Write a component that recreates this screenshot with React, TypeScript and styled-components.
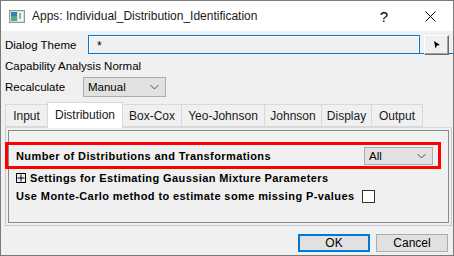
import styled, { createGlobalStyle } from "styled-components";

const GlobalStyle = createGlobalStyle`
  body {
    margin: 0;
    background: #ffffff;
  }
  * {
    box-sizing: border-box;
  }
`;

const Window = styled.div`
  width: 454px;
  height: 256px;
  border: 1px solid #7a7a7a;
  background: #f0f0f0;
  display: flex;
  flex-direction: column;
  font-family: "Liberation Sans", Arial, sans-serif;
  color: #000;
  overflow: hidden;
`;

const TitleBar = styled.div`
  height: 30px;
  background: #ffffff;
  display: flex;
  align-items: center;
  padding-left: 8px;
  flex-shrink: 0;
`;

const TitleText = styled.div`
  font-size: 12px;
  margin-left: 7px;
  flex: 1;
  white-space: nowrap;
  color: #1a1a1a;
`;

const TitleButton = styled.div<{ $w: number }>`
  width: ${(p) => p.$w}px;
  height: 30px;
  display: flex;
  align-items: center;
  justify-content: center;
  font-size: 15px;
`;

const Body = styled.div`
  display: flex;
  flex-direction: column;
  padding-left: 4px;
  flex: 1;
`;

const Row = styled.div<{ $h: number; $top?: number }>`
  display: flex;
  align-items: center;
  height: ${(p) => p.$h}px;
  margin-top: ${(p) => p.$top ?? 0}px;
  font-size: 11.5px;
  white-space: nowrap;
`;

const Label = styled.div<{ $w?: number }>`
  width: ${(p) => (p.$w ? `${p.$w}px` : "auto")};
  flex-shrink: 0;
`;

const ThemeField = styled.div`
  flex: 1;
  height: 19px;
  display: flex;
  align-items: flex-start;
  border-bottom: 1px solid #0078d7;
  align-self: flex-start;
`;

const ThemeInput = styled.div`
  width: 332px;
  height: 18px;
  border: 1px solid #0078d7;
  border-bottom: none;
  box-shadow: inset 1px 1px 0 #fff, inset -1px 0 0 #fff;
  background: #f0f0f0;
  padding-left: 8px;
  font-size: 12px;
  line-height: 20px;
`;

const ArrowButton = styled.div`
  width: 25px;
  height: 20px;
  margin-left: 4px;
  flex-shrink: 0;
  background: #f0f0f0;
  border: 1px solid;
  border-color: #ffffff #6a6a6a #6a6a6a #ffffff;
  box-shadow: inset -1px -1px 0 #a0a0a0;
  display: flex;
  align-items: center;
  justify-content: center;
  position: relative;
  z-index: 1;
`;

const Select = styled.div<{ $w: number; $h: number }>`
  width: ${(p) => p.$w}px;
  height: ${(p) => p.$h}px;
  background: #e1e1e1;
  border: 1px solid #adadad;
  display: flex;
  align-items: center;
  justify-content: space-between;
  padding: 0 6px 0 4px;
  font-family: "Liberation Sans", Arial, sans-serif;
  font-weight: normal;
  letter-spacing: 0;
  font-size: 11.5px;
`;

const TabStrip = styled.div`
  display: flex;
  align-items: flex-end;
  height: 25px;
  margin-top: 5px;
  position: relative;
  z-index: 1;
`;

const Tab = styled.div<{ $w: number; $active?: boolean; $first?: boolean }>`
  width: ${(p) => p.$w}px;
  height: ${(p) => (p.$active ? 26 : 23)}px;
  margin-bottom: ${(p) => (p.$active ? -1 : 0)}px;
  background: ${(p) => (p.$active ? "#ffffff" : "#f0f0f0")};
  border: 1px solid #d9d9d9;
  border-bottom: ${(p) => (p.$active ? "none" : "1px solid #d9d9d9")};
  border-left: ${(p) => (p.$first || p.$active ? "1px solid #d9d9d9" : "none")};
  margin-left: ${(p) => (p.$active ? -1 : 0)}px;
  display: flex;
  align-items: ${(p) => (p.$active ? "flex-start" : "center")};
  padding-top: ${(p) => (p.$active ? 5 : 0)}px;
  justify-content: center;
  font-size: 12px;
  color: #1a1a1a;
`;

const Panel = styled.div`
  width: 447px;
  height: 99px;
  border: 1px solid #c8c8d0;
  border-top-color: #d9d9d9;
  padding: 2px;
  display: flex;
`;

const InnerBox = styled.div`
  flex: 1;
  border: 1px solid #8a8a8a;
  display: flex;
  flex-direction: column;
  font-family: "Liberation Sans", Arial, sans-serif;
  font-weight: bold;
  font-size: 11px;
  letter-spacing: 0.4px;
  white-space: nowrap;
`;

const HighlightRow = styled.div`
  height: 27px;
  margin: 11px 7px 0 -4px;
  border: 3px solid #ff0000;
  display: flex;
  align-items: center;
  justify-content: space-between;
  padding: 0 5px 0 8px;
`;

const OptionRow = styled.div`
  height: 18px;
  display: flex;
  align-items: center;
  padding-left: 7px;
`;

const PlusBox = styled.div`
  width: 10px;
  height: 10px;
  border: 1px solid #000;
  margin-right: 4px;
  display: flex;
  align-items: center;
  justify-content: center;
`;

const CheckBox = styled.div`
  width: 13px;
  height: 13px;
  border: 1px solid #333;
  background: #fff;
  margin-left: 8px;
`;

const Footer = styled.div`
  display: flex;
  justify-content: flex-end;
  gap: 6px;
  margin-top: 8px;
  padding-right: 5px;
`;

const DialogButton = styled.div<{ $default?: boolean }>`
  width: 72px;
  height: 18px;
  background: #e1e1e1;
  border: ${(p) => (p.$default ? "2px solid #0078d7" : "1px solid #adadad")};
  display: flex;
  align-items: center;
  justify-content: center;
  font-size: 12px;
`;

const Chevron = () => (
  <svg width="9" height="6" viewBox="0 0 9 6">
    <path d="M0.5 1 L4.5 5 L8.5 1" fill="none" stroke="#555" strokeWidth="1" />
  </svg>
);

const AppIcon = () => (
  <svg width="16" height="13" viewBox="0 0 16 13">
    <rect x="0.5" y="0.5" width="15" height="12" fill="#d8dde0" stroke="#8c969c" />
    <rect x="2" y="2" width="6" height="9" fill="#3a7fa8" />
    <rect x="2" y="6" width="6" height="5" fill="#5ba38c" />
    <rect x="9" y="2" width="5" height="9" fill="#f2f5f2" />
    <rect x="10" y="3" width="2" height="6" fill="#7fc28a" />
  </svg>
);

const tabs = [
  { label: "Input", w: 43 },
  { label: "Distribution", w: 76 },
  { label: "Box-Cox", w: 59 },
  { label: "Yeo-Johnson", w: 83 },
  { label: "Johnson", w: 57 },
  { label: "Display", w: 50 },
  { label: "Output", w: 51 },
];

export default function App() {
  return (
    <>
      <GlobalStyle />
      <Window>
        <TitleBar>
          <AppIcon />
          <TitleText>Apps: Individual_Distribution_Identification</TitleText>
          <TitleButton $w={46}>?</TitleButton>
          <TitleButton $w={46}>
            <svg width="11" height="11" viewBox="0 0 11 11">
              <path d="M0.5 0.5 L10.5 10.5 M10.5 0.5 L0.5 10.5" stroke="#000" strokeWidth="1" />
            </svg>
          </TitleButton>
        </TitleBar>
        <Body>
          <Row $h={20} $top={4}>
            <Label $w={83}>Dialog Theme</Label>
            <ThemeField>
              <ThemeInput>*</ThemeInput>
              <ArrowButton>
                <svg width="8" height="8" viewBox="0 0 8 8">
                  <path d="M1 0 L7 4 L4 4.5 L2.5 7.5 Z" fill="#000" />
                </svg>
              </ArrowButton>
            </ThemeField>
          </Row>
          <Row $h={21}>
            <Label>Capability Analysis Normal</Label>
          </Row>
          <Row $h={20} $top={1}>
            <Label $w={78}>Recalculate</Label>
            <Select $w={83} $h={20}>
              <span>Manual</span>
              <Chevron />
            </Select>
          </Row>
          <TabStrip>
            {tabs.map((t, i) => (
              <Tab key={t.label} $w={t.w} $active={t.label === "Distribution"} $first={i === 0}>
                {t.label}
              </Tab>
            ))}
          </TabStrip>
          <Panel>
            <InnerBox>
              <HighlightRow>
                <span>Number of Distributions and Transformations</span>
                <Select $w={69} $h={18}>
                  <span>All</span>
                  <Chevron />
                </Select>
              </HighlightRow>
              <OptionRow>
                <PlusBox>
                  <svg width="8" height="8" viewBox="0 0 8 8">
                    <path d="M4 0.5 V7.5 M0.5 4 H7.5" stroke="#000" strokeWidth="1" />
                  </svg>
                </PlusBox>
                <span>Settings for Estimating Gaussian Mixture Parameters</span>
              </OptionRow>
              <OptionRow>
                <span>Use Monte-Carlo method to estimate some missing P-values</span>
                <CheckBox />
              </OptionRow>
            </InnerBox>
          </Panel>
          <Footer>
            <DialogButton $default>OK</DialogButton>
            <DialogButton>Cancel</DialogButton>
          </Footer>
        </Body>
      </Window>
    </>
  );
}
